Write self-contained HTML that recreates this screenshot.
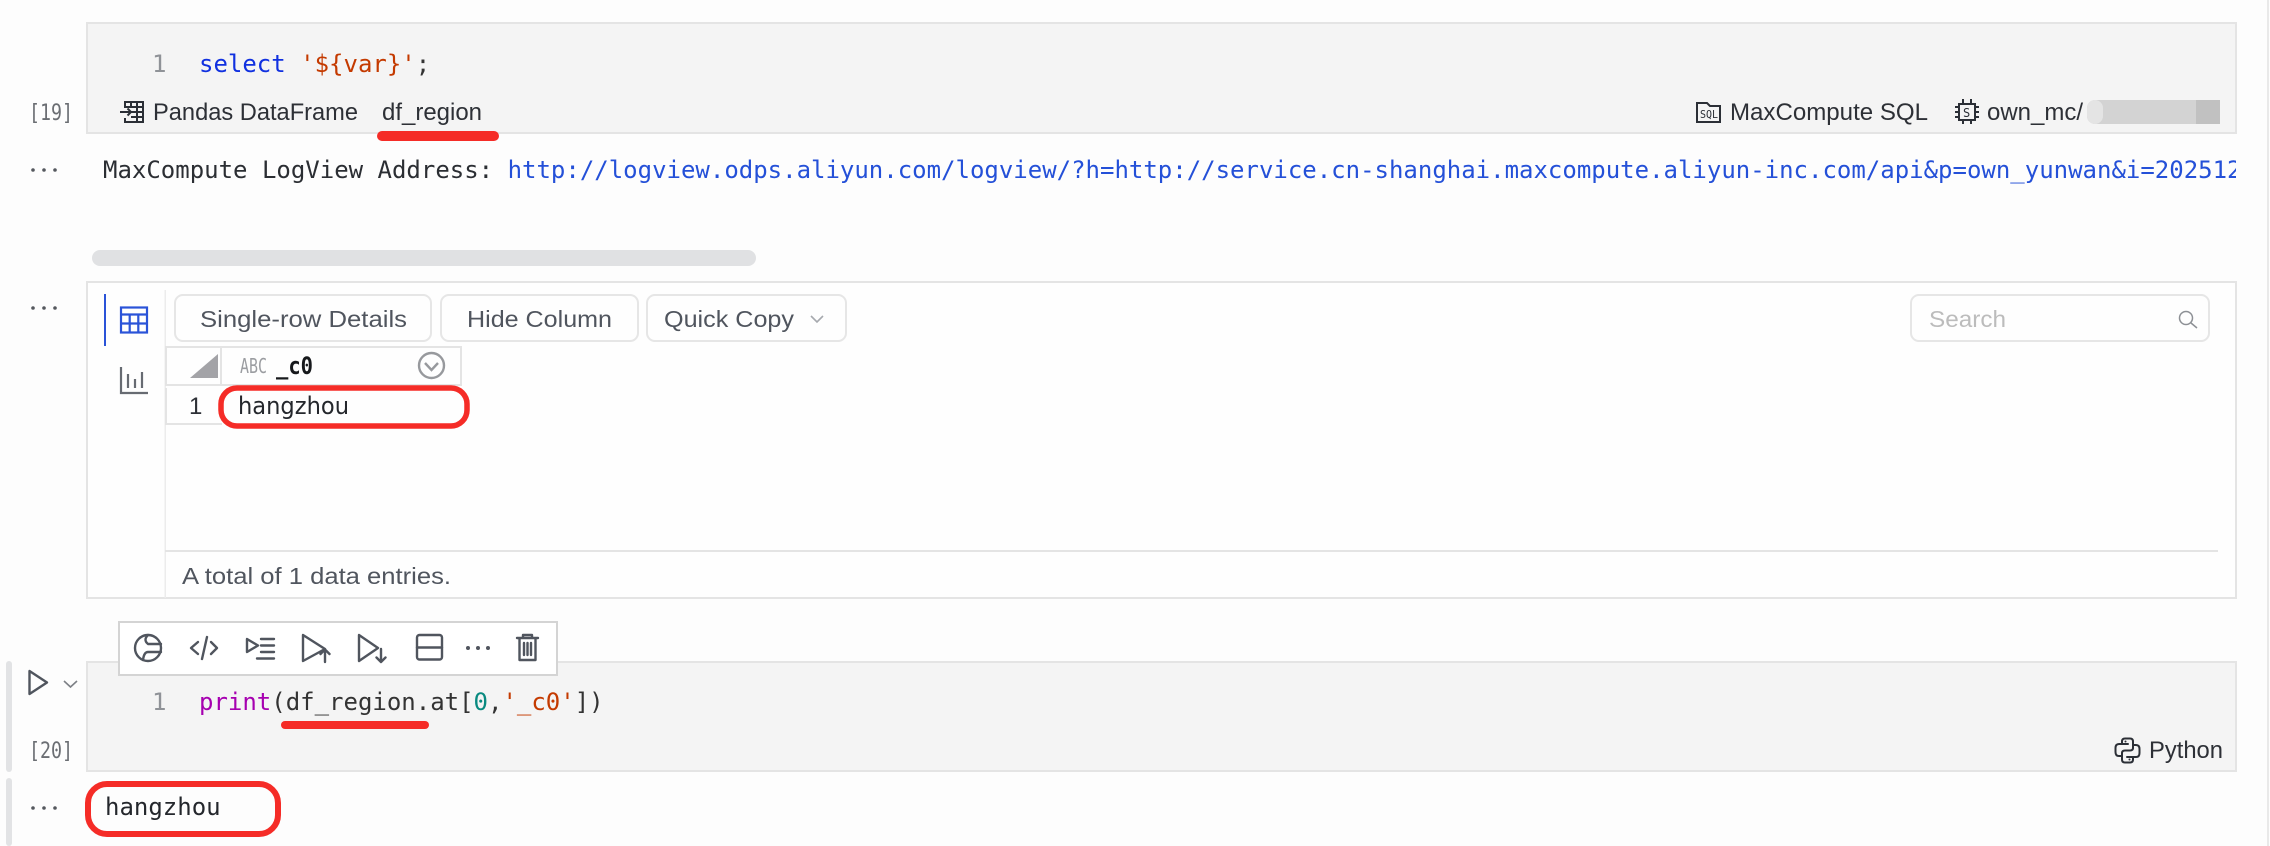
<!DOCTYPE html>
<html><head><meta charset="utf-8"><style>
html,body{margin:0;padding:0;background:#fdfdfd;width:2270px;height:846px;overflow:hidden}
svg{display:block}
.m{font-family:"DejaVu Sans Mono","Liberation Mono",monospace;font-size:24px}
.s{font-family:"Liberation Sans",sans-serif;font-size:24px}
.ic{fill:none;stroke:#50555e;stroke-width:2.4;stroke-linejoin:round;stroke-linecap:round}
.ik{fill:none;stroke:#2b2f36;stroke-width:2;stroke-linejoin:miter}
</style></head><body>
<svg width="2270" height="846" viewBox="0 0 2270 846" xmlns="http://www.w3.org/2000/svg">
<rect x="2267" y="0" width="2" height="846" fill="#e9e9e9"/>
<rect x="6" y="661" width="6" height="111" rx="3" fill="#e2e3e5"/>
<rect x="6" y="778" width="6" height="68" rx="3" fill="#e2e3e5"/>

<!-- cell 19 -->
<rect x="87" y="23" width="2149" height="110" fill="#f4f4f4" stroke="#e4e4e4" stroke-width="2"/>
<text class="m" x="152" y="72" fill="#8f9297">1</text>
<text class="m" x="199" y="72"><tspan fill="#1030e0">select</tspan><tspan fill="#333"> </tspan><tspan fill="#c43a00">'${var}'</tspan><tspan fill="#333">;</tspan></text>
<text class="m" x="29" y="120" style="font-size:22px" fill="#6b6e73" textLength="44" lengthAdjust="spacingAndGlyphs">[19]</text>
<!-- pandas icon -->
<g class="ik">
<path d="M125 108V102H143V122H125V118M131 102V108M137 102V122M125 107H143M131 112H143M131 117H143"/>
<path d="M120 112H131M127.500 108.500L131 112L127.500 115.500"/>
</g>
<text class="s" x="153" y="120" fill="#2d3036" textLength="205" lengthAdjust="spacingAndGlyphs">Pandas DataFrame</text>
<text class="s" x="382" y="120" fill="#2d3036" textLength="100" lengthAdjust="spacingAndGlyphs">df_region</text>
<rect x="377" y="131" width="122" height="10" rx="5" fill="#f52c27"/>
<!-- SQL icon -->
<path class="ik" d="M1697 122V103H1707L1710 106H1720V122Z"/>
<text x="1700" y="118" style="font-family:'DejaVu Sans Mono',monospace;font-size:11px" fill="#2b2f36" textLength="18" lengthAdjust="spacingAndGlyphs">SQL</text>
<text class="s" x="1730" y="120" fill="#2d3036" textLength="198" lengthAdjust="spacingAndGlyphs">MaxCompute SQL</text>
<!-- chip icon -->
<g class="ik">
<rect x="1959" y="104" width="16" height="16"/>
<path d="M1963 99V104M1971 99V104M1963 120V124M1971 120V124M1955 107H1959M1955 112H1959M1955 117H1959M1975 107H1979M1975 112H1979M1975 117H1979"/>
</g>
<text x="1963" y="117" style="font-family:'DejaVu Sans Mono',monospace;font-size:12px" fill="#2b2f36">S</text>
<text class="s" x="1987" y="120" fill="#2d3036">own_mc/</text>
<rect x="2087" y="100" width="125" height="24" rx="8" fill="#d3d3d3"/>
<rect x="2087" y="100" width="16" height="24" rx="8" fill="#e4e4e4"/>
<rect x="2196" y="100" width="24" height="24" fill="#c1c1c1"/>

<!-- output log -->
<g fill="#55585e"><circle cx="33" cy="170" r="1.800"/><circle cx="44" cy="170" r="1.800"/><circle cx="55" cy="170" r="1.800"/></g>
<svg x="0" y="140" width="2236" height="60" viewBox="0 140 2236 60">
<text class="m" x="103" y="178"><tspan fill="#2b2e33">MaxCompute LogView Address: </tspan><tspan fill="#2450d8">http://logview.odps.aliyun.com/logview/?h=http://service.cn-shanghai.maxcompute.aliyun-inc.com/api&amp;p=own_yunwan&amp;i=2025121</tspan></text>
</svg>
<rect x="92" y="250" width="664" height="16" rx="8" fill="#e0e1e3"/>

<!-- dataframe -->
<g fill="#55585e"><circle cx="33" cy="308" r="1.800"/><circle cx="44" cy="308" r="1.800"/><circle cx="55" cy="308" r="1.800"/></g>
<rect x="87" y="282" width="2149" height="316" fill="#fefefe" stroke="#e4e4e4" stroke-width="2"/>
<rect x="164.500" y="290" width="1.500" height="308" fill="#ececec"/>
<rect x="165" y="550" width="2053" height="2" fill="#e4e4e4"/>
<rect x="104" y="294" width="2" height="52" fill="#2a53d8"/>
<g fill="none" stroke="#2a53d8" stroke-width="2.200">
<rect x="121" y="307.500" width="26" height="25"/>
<path d="M121 314.500H147M121 323.500H147M129.700 314.500V332.500M138.300 314.500V332.500"/>
</g>
<path d="M121 367V393H148M128 374V388M135 379V388M142 372V388" fill="none" stroke="#676b72" stroke-width="2.200"/>

<g fill="#fefefe" stroke="#e6e6e6" stroke-width="2">
<rect x="175" y="295" width="256" height="46" rx="8"/>
<rect x="441" y="295" width="197" height="46" rx="8"/>
<rect x="647" y="295" width="199" height="46" rx="8"/>
<rect x="1911" y="295" width="298" height="46" rx="8"/>
</g>
<g class="s" fill="#50555e" style="font-size:23px">
<text x="200" y="327" textLength="207" lengthAdjust="spacingAndGlyphs">Single-row Details</text>
<text x="467" y="327" textLength="145" lengthAdjust="spacingAndGlyphs">Hide Column</text>
<text x="664" y="327" textLength="130" lengthAdjust="spacingAndGlyphs">Quick Copy</text>
</g>
<path d="M811 316L817 322L823 316" fill="none" stroke="#a6a9ae" stroke-width="1.600"/>
<text class="s" x="1929" y="327" fill="#bcbcbc" style="font-size:23px" textLength="77" lengthAdjust="spacingAndGlyphs">Search</text>
<circle cx="2186" cy="318" r="6.500" fill="none" stroke="#8d9095" stroke-width="1.500"/>
<path d="M2191 323L2197 328" stroke="#8d9095" stroke-width="1.500"/>

<!-- table -->
<g fill="none" stroke="#e4e4e4" stroke-width="2">
<rect x="166" y="347" width="55" height="38"/>
<rect x="221" y="347" width="240" height="38"/>
<path d="M166 388V424H222"/>
</g>
<path d="M190 378L218 354V378Z" fill="#a3a3a7"/>
<text x="240" y="373" style="font-family:'DejaVu Sans Mono',monospace;font-size:20px" fill="#9b9da1" textLength="27" lengthAdjust="spacingAndGlyphs">ABC</text>
<text x="276" y="374" style="font-family:'DejaVu Sans Mono',monospace;font-size:24px;font-weight:bold" fill="#17191c" textLength="37" lengthAdjust="spacingAndGlyphs">_c0</text>
<circle cx="431.500" cy="365.500" r="12.500" fill="none" stroke="#97999d" stroke-width="2.400"/>
<path d="M425 363L431.500 370L438 363" fill="none" stroke="#97999d" stroke-width="2.400"/>
<text class="s" x="189" y="414" fill="#2d3036" style="font-size:24px">1</text>
<text x="238" y="414" style="font-family:'DejaVu Sans','Liberation Sans',sans-serif;font-size:24px" fill="#24272c" textLength="111" lengthAdjust="spacingAndGlyphs">hangzhou</text>
<rect x="221" y="388" width="246" height="38" rx="16" fill="none" stroke="#f52c27" stroke-width="5.500"/>
<text class="s" x="182" y="584" fill="#50555e" style="font-size:23px" textLength="269" lengthAdjust="spacingAndGlyphs">A total of 1 data entries.</text>

<!-- cell 20 -->
<rect x="87" y="662" width="2149" height="109" fill="#f4f4f4" stroke="#e4e4e4" stroke-width="2"/>
<text class="m" x="152" y="710" fill="#8f9297">1</text>
<text class="m" x="199" y="710"><tspan fill="#a600b0">print</tspan><tspan fill="#333">(df_region.at[</tspan><tspan fill="#098a80">0</tspan><tspan fill="#333">,</tspan><tspan fill="#c43a00">'_c0'</tspan><tspan fill="#333">])</tspan></text>
<rect x="281" y="721" width="148" height="8" rx="4" fill="#f52c27"/>
<text class="m" x="29" y="758" style="font-size:22px" fill="#6b6e73" textLength="44" lengthAdjust="spacingAndGlyphs">[20]</text>
<path d="M29.500 671V694L47 682.500Z" fill="none" stroke="#50555e" stroke-width="2.400" stroke-linejoin="round"/>
<path d="M64 681L70.500 687L77 681" fill="none" stroke="#7d8086" stroke-width="1.600"/>
<!-- python icon -->
<g class="ik" style="stroke-linejoin:round;stroke-linecap:round">
<path d="M2128 744H2122V741.500Q2122 738.500 2125 738.500H2130Q2133 738.500 2133 741.500V748Q2133 750.500 2130 750.500H2125Q2122 750.500 2122 753V756H2119Q2115.500 756 2115.500 752V748Q2115.500 744 2119 744H2122"/>
<path d="M2127 757H2133V759.500Q2133 762.500 2130 762.500H2125Q2122 762.500 2122 759.500V753M2133 748V745H2136Q2139.500 745 2139.500 749V753Q2139.500 757 2136 757H2133"/>
</g>
<circle cx="2125.500" cy="741.500" r="1" fill="#2b2f36"/><circle cx="2129.500" cy="759.500" r="1" fill="#2b2f36"/>
<text class="s" x="2149" y="758" fill="#2d3036" textLength="74" lengthAdjust="spacingAndGlyphs">Python</text>

<!-- toolbar -->
<rect x="119" y="622" width="438" height="53" fill="#fff" stroke="#d4d4d4" stroke-width="2"/>
<g class="ic">
<circle cx="148" cy="648" r="13"/>
<path d="M148 635Q143 640 148 644H161M161 652H148Q144 652 143 660"/>
<path d="M198 642L191 648L198 654M202 659L207 637M211 642L217 648L211 654"/>
<path d="M247 639L258 645.500L247 652ZM261 639H274M261 645.500H274M261 652H274M257 658.500H274"/>
<path d="M303 635L325 649L303 661ZM325 662V650M320.500 654L325 649.500L329.500 654"/>
<path d="M359 635L378 648L359 661ZM381 649V662M376.500 657.500L381 662L385.500 657.500"/>
<rect x="417" y="635" width="25" height="24.500" rx="2.500"/>
<path d="M417 647.500H442"/>
<path d="M517 638H538M523 638V635H532V638M519.500 638V660H535.500V638M524 643V655M527.500 643V655M531 643V655"/>
</g>
<g fill="#50555e"><circle cx="468" cy="648" r="2"/><circle cx="478" cy="648" r="2"/><circle cx="488" cy="648" r="2"/></g>

<!-- output 20 -->
<g fill="#55585e"><circle cx="33" cy="808" r="1.800"/><circle cx="44" cy="808" r="1.800"/><circle cx="55" cy="808" r="1.800"/></g>
<text class="m" x="105" y="815" fill="#24272c">hangzhou</text>
<rect x="88" y="784" width="190" height="50" rx="19" fill="none" stroke="#f52c27" stroke-width="6"/>
</svg>
</body></html>
